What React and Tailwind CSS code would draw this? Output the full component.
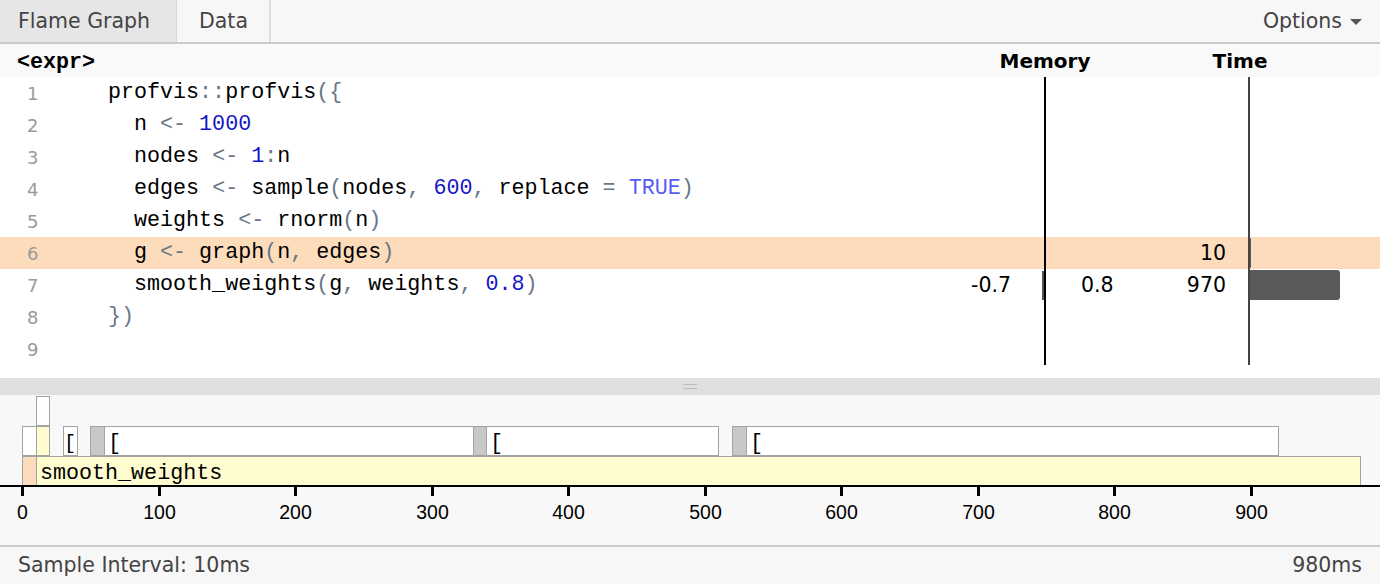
import React from 'react'

const SANS = "font-['DejaVu_Sans',sans-serif]"
const MONO = "font-['Liberation_Mono',monospace]"

// token kinds: t = plain, o = operator, n = number, b = constant
const LINES = [
  [['profvis', 't'], ['::', 'o'], ['profvis', 't'], ['({', 'o']],
  [['  n ', 't'], ['<-', 'o'], [' ', 't'], ['1000', 'n']],
  [['  nodes ', 't'], ['<-', 'o'], [' ', 't'], ['1', 'n'], [':', 'o'], ['n', 't']],
  [['  edges ', 't'], ['<-', 'o'], [' sample', 't'], ['(', 'o'], ['nodes', 't'], [',', 'o'], [' ', 't'], ['600', 'n'], [',', 'o'], [' replace ', 't'], ['=', 'o'], [' ', 't'], ['TRUE', 'b'], [')', 'o']],
  [['  weights ', 't'], ['<-', 'o'], [' rnorm', 't'], ['(', 'o'], ['n', 't'], [')', 'o']],
  [['  g ', 't'], ['<-', 'o'], [' graph', 't'], ['(', 'o'], ['n', 't'], [',', 'o'], [' edges', 't'], [')', 'o']],
  [['  smooth_weights', 't'], ['(', 'o'], ['g', 't'], [',', 'o'], [' weights', 't'], [',', 'o'], [' ', 't'], ['0.8', 'n'], [')', 'o']],
  [['}', 'o'], [')', 'o']],
  [],
]

const TOKEN_CLS = { t: 'text-black', o: 'text-[#687687]', n: 'text-[#1515c8]', b: 'text-[#585cf6]' }

// per-line stats
const STATS = {
  6: { time: 10 },
  7: { memNeg: '-0.7', memPos: '0.8', time: 970, negBar: 2 },
}

// flame graph scale
const X0 = 22
const K = 1.3653
const px = v => X0 + v * K

const BLOCKS = [
  // row 0 = bottom
  { row: 0, a: 0, b: 10, bg: 'bg-[#fddbbd]' },
  { row: 0, a: 10, b: 980, bg: 'bg-[#fffdd0]', label: 'smooth_weights' },
  { row: 1, a: 0, b: 10, bg: 'bg-white' },
  { row: 1, a: 10, b: 20, bg: 'bg-[#fffdd0]' },
  { row: 1, a: 30, b: 40, bg: 'bg-white', label: '[', tight: true },
  { row: 1, a: 50, b: 60, bg: 'bg-[#c8c8c8]' },
  { row: 1, a: 60, b: 330, bg: 'bg-white', label: '[' },
  { row: 1, a: 330, b: 340, bg: 'bg-[#c8c8c8]' },
  { row: 1, a: 340, b: 510, bg: 'bg-white', label: '[' },
  { row: 1, a: 520, b: 530, bg: 'bg-[#c8c8c8]' },
  { row: 1, a: 530, b: 920, bg: 'bg-white', label: '[' },
  { row: 2, a: 10, b: 20, bg: 'bg-white' },
]

const TICKS = [0, 100, 200, 300, 400, 500, 600, 700, 800, 900]

function CodeRow({ n, tokens }) {
  const st = STATS[n] || {}
  const hl = n === 6
  return (
    <div className={`flex h-8 items-center ${hl ? 'bg-[#fddcbb]' : ''}`}>
      <div className={`w-[108px] shrink-0 pl-[27px] text-[18px] text-[#9a9a9a] ${SANS}`}>{n}</div>
      <div className={`w-[822px] shrink-0 whitespace-pre text-[21.7px] leading-8 ${MONO}`}>
        {tokens.map(([s, k], i) => (
          <span key={i} className={TOKEN_CLS[k]}>{s}</span>
        ))}
      </div>
      <div className={`flex h-full w-[114px] shrink-0 items-center justify-end text-[20.5px] text-black ${SANS}`}>
        <span className="pr-[31px]">{st.memNeg}</span>
        {st.negBar ? <div className="h-[29px] w-[2px] bg-[#555]" /> : null}
      </div>
      <div className={`flex h-full w-[104px] shrink-0 items-center border-l-2 border-black text-[20.5px] text-black ${SANS}`}>
        <span className="pl-[35px]">{st.memPos}</span>
      </div>
      <div className={`flex h-full w-[100px] shrink-0 items-center justify-end pr-[22px] text-[20.5px] text-black ${SANS}`}>
        {st.time}
      </div>
      <div className="flex h-full flex-1 items-center border-l-2 border-[#444]">
        {st.time ? (
          <div
            className="h-[30px] rounded-r-[3px] bg-[#5a5a5a]"
            style={{ width: Math.max(1, Math.round((st.time / 970) * 90)) }}
          />
        ) : null}
      </div>
    </div>
  )
}

export default function App() {
  return (
    <div className="flex h-[584px] w-[1380px] flex-col overflow-hidden bg-white">
      {/* tabs */}
      <div className={`flex h-[44px] shrink-0 items-stretch border-b-2 border-[#cbcbcb] bg-[#f7f7f7] text-[20.5px] text-[#444] ${SANS}`}>
        <div className="flex w-[177px] items-center border-r border-[#d6d6d6] bg-[#e6e6e6] pl-[18px]">Flame Graph</div>
        <div className="flex w-[94px] items-center border-r-2 border-[#dedede] pl-[22px]">Data</div>
        <div className="flex-1" />
        <div className="flex items-center gap-[8px] pr-[18px]">
          Options
          <span className="mt-[2px] h-0 w-0 border-x-[6px] border-t-[6px] border-x-transparent border-t-[#555]" />
        </div>
      </div>

      {/* header */}
      <div className="flex h-[33px] shrink-0 items-center bg-[#f9f9f9]">
        <div className={`flex-1 translate-y-[3px] pl-[17px] text-[21.7px] font-bold text-black ${MONO}`}>&lt;expr&gt;</div>
        <div className={`w-[198px] text-center text-[20px] font-bold text-black ${SANS}`}>Memory</div>
        <div className={`w-[192px] text-center text-[20px] font-bold text-black ${SANS}`}>Time</div>
        <div className="w-[44px]" />
      </div>

      {/* code */}
      <div className="h-[301px] shrink-0 bg-white">
        {LINES.map((tokens, i) => (
          <CodeRow key={i} n={i + 1} tokens={tokens} />
        ))}
      </div>

      {/* splitter */}
      <div className="flex h-[17px] shrink-0 items-center justify-center bg-[#dfdfdf]">
        <div className="flex flex-col gap-[3px]">
          <div className="h-px w-[14px] bg-[#bdbdbd]" />
          <div className="h-px w-[14px] bg-[#bdbdbd]" />
        </div>
      </div>

      {/* flame graph */}
      <div className="relative h-[150px] shrink-0 bg-[#f8f8f8]">
        {BLOCKS.map((b, i) => (
          <div
            key={i}
            className={`absolute flex h-[30px] items-center whitespace-nowrap border border-[#a3a3a3] pt-[6px] text-[21.7px] text-black ${MONO} ${b.bg} ${b.tight ? 'pl-0' : 'pl-[3px]'}`}
            style={{ left: Math.round(px(b.a)), width: Math.round(px(b.b)) - Math.round(px(b.a)) + 1, top: 61 - b.row * 30 }}
          >
            {b.label ? <span className={b.tight ? 'w-[12px] text-[20px] leading-none' : ''}>{b.label}</span> : null}
          </div>
        ))}
        <div className="absolute left-0 right-0 top-[90px] h-[2px] bg-black" />
        {TICKS.map(t => (
          <div key={t} className="absolute top-[92px]" style={{ left: Math.round(px(t)) - 1 }}>
            <div className="h-[9px] w-[3px] bg-black" />
            <div className="absolute top-[11px] w-[60px] -translate-x-1/2 text-center font-['Liberation_Sans',sans-serif] text-[19.5px] text-black" style={{ left: 1.5 }}>
              {t}
            </div>
          </div>
        ))}
      </div>

      {/* footer */}
      <div className={`flex flex-1 items-center justify-between border-t-2 border-[#cbcbcb] bg-[#f7f7f7] px-[18px] text-[20.5px] text-[#444] ${SANS}`}>
        <span>Sample Interval: 10ms</span>
        <span>980ms</span>
      </div>
    </div>
  )
}
